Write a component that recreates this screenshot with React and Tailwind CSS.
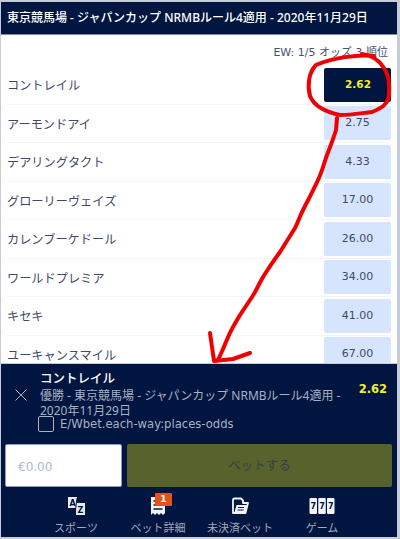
const fontStack = { fontFamily: '"DejaVu Sans", "Noto Sans CJK JP", sans-serif' };
const narrowStack = { fontFamily: '"Noto Sans", "Noto Sans CJK JP", sans-serif' };

const runners = [
  { name: 'コントレイル', odds: '2.62', selected: true },
  { name: 'アーモンドアイ', odds: '2.75' },
  { name: 'デアリングタクト', odds: '4.33' },
  { name: 'グローリーヴェイズ', odds: '17.00' },
  { name: 'カレンブーケドール', odds: '26.00' },
  { name: 'ワールドプレミア', odds: '34.00' },
  { name: 'キセキ', odds: '41.00' },
  { name: 'ユーキャンスマイル', odds: '67.00' },
];

function SportsIcon() {
  return (
    <svg width="20" height="20" viewBox="0 0 20 20">
      <rect x="2" y="1" width="9" height="11" fill="#e8ebf2" />
      <rect x="10" y="7" width="9" height="12" fill="#e8ebf2" />
      <path d="M11 2 L9 18" stroke="#001640" strokeWidth="1" />
      <text x="6.5" y="9.5" fontSize="8" fontWeight="700" textAnchor="middle" fill="#001640">A</text>
      <text x="14.5" y="16.5" fontSize="8" fontWeight="700" textAnchor="middle" fill="#001640">Z</text>
    </svg>
  );
}

function ReceiptIcon() {
  return (
    <svg width="20" height="20" viewBox="0 0 20 20">
      <path d="M3 1 H17 V17 L15 19 L13 17 L11 19 L9 17 L7 19 L5 17 L3 19 Z" fill="#f2f4f8" />
      <path d="M5.5 5 H14.5 M5.5 9 H14.5 M5.5 13 H14.5" stroke="#001640" strokeWidth="1.6" />
    </svg>
  );
}

function FolderIcon() {
  return (
    <svg width="18" height="18" viewBox="0 0 18 18">
      <path d="M2 16 V3 Q2 1.5 3.5 1.5 H10 L12 3.5 V6 H17 L14.5 16 Z" fill="none" stroke="#f2f4f8" strokeWidth="1.8" strokeLinejoin="round" />
      <path d="M5.5 8 H16.5 L14.5 15.5 H3.5 Z" fill="#f2f4f8" />
      <path d="M7 10.5 H13 M6.5 13 H12.5" stroke="#001640" strokeWidth="1" />
    </svg>
  );
}

function SlotsIcon() {
  return (
    <svg width="26" height="16" viewBox="0 0 26 16">
      <rect x="0.5" y="0" width="7.5" height="16" rx="1" fill="#f2f4f8" />
      <rect x="9.25" y="0" width="7.5" height="16" rx="1" fill="#f2f4f8" />
      <rect x="18" y="0" width="7.5" height="16" rx="1" fill="#f2f4f8" />
      <text x="4.25" y="11" fontSize="8" fontWeight="700" textAnchor="middle" fill="#001640">7</text>
      <text x="13" y="11" fontSize="8" fontWeight="700" textAnchor="middle" fill="#001640">7</text>
      <text x="21.75" y="11" fontSize="8" fontWeight="700" textAnchor="middle" fill="#001640">7</text>
    </svg>
  );
}

function NavItem({ icon, label, badge }) {
  return (
    <div className="relative flex flex-col items-center">
      <div className="relative flex h-[22px] items-center justify-center">
        {icon}
        {badge && (
          <span className="absolute left-[7px] top-[-2px] flex h-[13px] w-[17px] items-center justify-center rounded-[1px] bg-[#e8501a] text-[9px] font-bold text-white">
            {badge}
          </span>
        )}
      </div>
      <span className="mt-[4px] whitespace-nowrap text-[11px] leading-[16px] text-[#a0a8ba]">{label}</span>
    </div>
  );
}

export default function App() {
  return (
    <div className="relative flex h-[539px] w-[400px] flex-col overflow-hidden bg-[#c6cbd8] pb-[2px] pl-[1px] pr-[3px] pt-[2px]" style={fontStack}>
      <div className="flex h-[33px] shrink-0 items-center border-b border-[#7d89a8] bg-[#001640] pl-[6px] text-[12px] font-medium whitespace-nowrap text-white" style={narrowStack}>
        東京競馬場 - ジャパンカップ NRMBルール4適用 - 2020年11月29日
      </div>

      <div className="min-h-0 flex-1 overflow-hidden bg-white pl-[5px] pr-[6px]">
        <div className="flex h-[31px] items-end justify-end pb-[6px] pr-[3px] text-[11px] leading-[14px] text-[#47526f]">
          EW: 1/5 オッズ 3 順位
        </div>
        {runners.map((r) => (
          <div key={r.name} className="flex h-[38.5px] items-center justify-between border-b border-[#f3f5fb]">
            <span className="pl-[1px] pt-[3px] text-[12.2px] text-[#3f4a68]">{r.name}</span>
            <div
              className={
                r.selected
                  ? 'flex h-[34px] w-[67px] items-center justify-center rounded-[2px] bg-[#001640] pl-[1px] text-[10.5px] font-bold text-[#f5f01e]'
                  : 'flex h-[34px] w-[67px] items-center justify-center rounded-[2px] bg-[#d6e4fd] text-[11px] text-[#3f4a68]'
              }
            >
              {r.odds}
            </div>
          </div>
        ))}
      </div>

      <div className="flex h-[174px] shrink-0 flex-col border-t border-[#c6cbd8] bg-[#001640]">
        <div className="flex h-[81px] items-start pl-[14px] pr-[10px] pt-[6px]">
          <svg width="12" height="12" viewBox="0 0 12 12" className="mr-[13px] mt-[19px] shrink-0">
            <path d="M0.5 0.5 L11.5 11.5 M11.5 0.5 L0.5 11.5" stroke="#a9b1c2" strokeWidth="1" />
          </svg>
          <div className="min-w-0 flex-1">
            <div className="text-[12.5px] font-medium leading-[18px] text-white">コントレイル</div>
            <div className="text-[12px] leading-[15px] text-[#a9b1c2]" style={narrowStack}>
              優勝 - 東京競馬場 - ジャパンカップ NRMBルール4適用 -<br />
              2020年11月29日
            </div>
            <div className="ml-[-2px] mt-[-2px] flex items-center">
              <span className="h-[16px] w-[16px] rounded-[2px] border border-[#a9b1c2]" />
              <span className="ml-[6px] text-[11.6px] leading-[16px] text-[#a9b1c2]">E/Wbet.each-way:places-odds</span>
            </div>
          </div>
          <div className="mt-[11px] text-[11.5px] font-bold text-[#f5f01e]">2.62</div>
        </div>

        <div className="flex h-[44px] gap-[5px] pl-[4px] pr-[5px]">
          <div className="flex w-[117px] items-center rounded-[2px] border border-[#8c9cc8] bg-white pl-[12px] pt-[3px] text-[12px] text-[#a9b9d8]">
            €0.00
          </div>
          <div className="flex flex-1 items-center justify-center rounded-[2px] bg-[#58622c] pt-[3px] text-[12.5px] text-[#33414a]">
            ベットする
          </div>
        </div>

        <div className="grid grid-cols-4 pl-[34px] pr-[34px] pt-[8px]">
          <NavItem icon={<SportsIcon />} label="スポーツ" />
          <NavItem icon={<ReceiptIcon />} label="ベット詳細" badge="1" />
          <NavItem icon={<FolderIcon />} label="未決済ベット" />
          <NavItem icon={<SlotsIcon />} label="ゲーム" />
        </div>
      </div>

      {/* red pen marks on top of the screenshot */}
      <svg width="400" height="539" viewBox="0 0 400 539" className="pointer-events-none absolute left-0 top-0">
        <path
          d="M374 56 C358 54 332 58 316 65 C309 72 307 85 310 96 C314 106 326 112 340 115 C352 115 362 113 372 112 C382 108 388 104 389 95 C390 84 388 74 384 68 C379 60 372 55 362 54"
          fill="none"
          stroke="#f00000"
          strokeWidth="4"
          strokeLinecap="round"
        />
        <path
          d="M337 118 L336 130 C333 140 330 147 327 155 C324 163 322 172 318 180 C313 191 308 200 303 210 C300 216 298 222 295 228 C290 236 285 244 280 252 C274 260 268 269 263 277 C259 284 256 291 252 297 C248 303 244 309 240 315 C236 322 232 328 229 335 C225 344 222 352 218 360"
          fill="none"
          stroke="#f00000"
          strokeWidth="4"
          strokeLinecap="round"
          strokeLinejoin="round"
        />
        <path d="M210 333 L214 361 L233 359 L250 353" fill="none" stroke="#f00000" strokeWidth="4" strokeLinecap="round" strokeLinejoin="round" />
      </svg>
    </div>
  );
}
